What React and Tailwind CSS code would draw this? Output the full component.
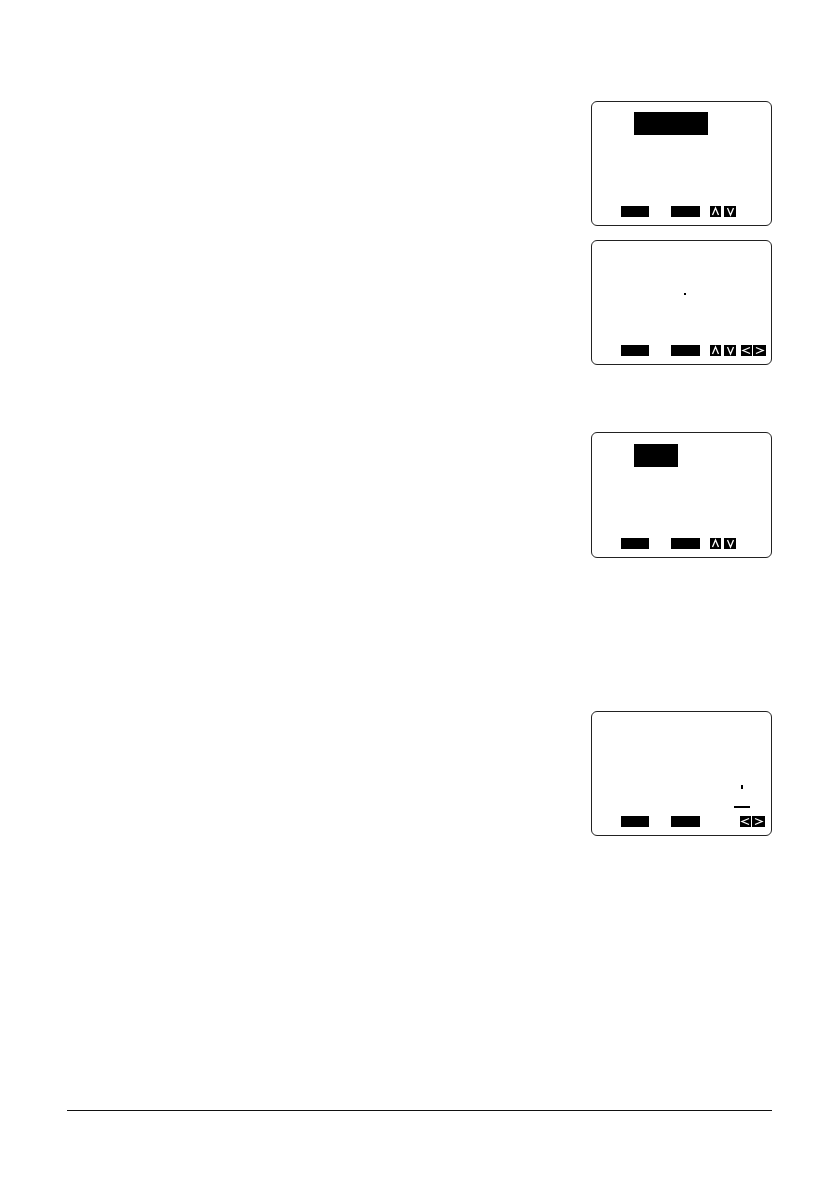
import React from "react";

function Key({ dir, w = 11 }) {
  const pts = {
    up: "2.5,9 5.5,2 8.5,9",
    down: "2.5,2 5.5,9 8.5,2",
    left: "9,2.5 2,5.5 9,8.5",
    right: "2,2.5 9,5.5 2,8.5",
  }[dir];
  return (
    <div className="h-[11px] bg-black flex items-center justify-center" style={{ width: w }}>
      <svg width="11" height="11" viewBox="0 0 11 11">
        <polyline points={pts} fill="none" stroke="white" strokeWidth="1.3" />
      </svg>
    </div>
  );
}

function BottomRow({ updown, leftright }) {
  return (
    <div className="flex items-center h-[11px] ml-[29px]">
      <div className="w-[28px] h-[11px] bg-black" />
      <div className="w-[29px] h-[11px] bg-black ml-[22px]" />
      {updown && (
        <div className="flex ml-[10px] gap-[3px]">
          <Key dir="up" />
          <Key dir="down" w={12} />
        </div>
      )}
      {leftright && (
        <div className={"flex gap-[1px] " + (updown ? "ml-[5px]" : "ml-[40px]")}>
          <Key dir="left" />
          <Key dir="right" w={13} />
        </div>
      )}
    </div>
  );
}

function Screen({ children, updown = true, leftright = false, className = "" }) {
  return (
    <div className={"w-[181px] h-[125px] border border-[#222] rounded-[6px] flex flex-col pb-[8px] " + className}>
      <div className="flex-1">{children}</div>
      <BottomRow updown={updown} leftright={leftright} />
    </div>
  );
}

export default function App() {
  return (
    <div className="w-[838px] h-[1190px] bg-white flex flex-col" style={{ fontFamily: '"Liberation Sans", Arial, sans-serif' }}>
      <div className="ml-[591px] mt-[101px]">
        <Screen>
          <div className="ml-[42px] mt-[10px] w-[74px] h-[23px] bg-black" />
        </Screen>
      </div>

      <div className="ml-[591px] mt-[14px]">
        <Screen leftright>
          <div className="ml-[92px] mt-[52px] w-[2px] h-[2px] bg-black" />
        </Screen>
      </div>

      <div className="ml-[591px] mt-[67px]">
        <Screen className="h-[126px]">
          <div className="ml-[42px] mt-[11px] w-[44px] h-[23px] bg-black" />
        </Screen>
      </div>

      <div className="ml-[591px] mt-[153px]">
        <Screen updown={false} leftright>
          <div className="ml-[149px] mt-[73px] w-[2px] h-[4px] bg-black" />
          <div className="ml-[142px] mt-[17px] w-[16px] h-[2px] bg-black" />
        </Screen>
      </div>

      <div className="ml-[67px] mt-[274px] w-[705px] h-[1px] bg-[#111]" />
    </div>
  );
}
